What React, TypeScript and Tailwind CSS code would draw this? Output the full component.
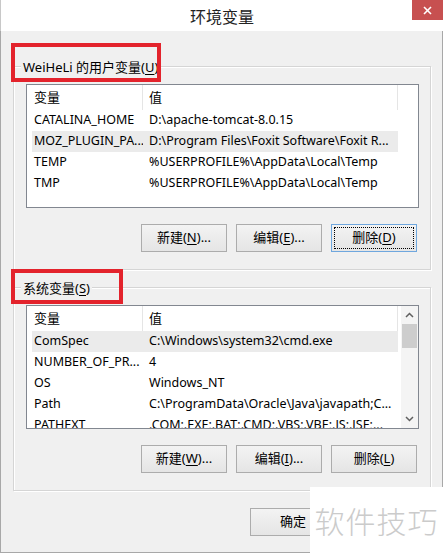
import React from 'react';

interface VarRow {
  name: string;
  value: string;
}

interface VarListProps {
  rows: VarRow[];
  selected?: number;
  scrollbar?: boolean;
}

const userVars: VarRow[] = [
  { name: 'CATALINA_HOME', value: 'D:\\apache-tomcat-8.0.15' },
  { name: 'MOZ_PLUGIN_PA...', value: 'D:\\Program Files\\Foxit Software\\Foxit R...' },
  { name: 'TEMP', value: '%USERPROFILE%\\AppData\\Local\\Temp' },
  { name: 'TMP', value: '%USERPROFILE%\\AppData\\Local\\Temp' },
];

const systemVars: VarRow[] = [
  { name: 'ComSpec', value: 'C:\\Windows\\system32\\cmd.exe' },
  { name: 'NUMBER_OF_PR...', value: '4' },
  { name: 'OS', value: 'Windows_NT' },
  { name: 'Path', value: 'C:\\ProgramData\\Oracle\\Java\\javapath;C...' },
  { name: 'PATHEXT', value: '.COM;.EXE;.BAT;.CMD;.VBS;.VBE;.JS;.JSE;...' },
];

// Windows-style push button, mnemonic letter underlined
const WinButton: React.FC<{ label?: string; mnemonic?: string; suffix?: string; focused?: boolean }> = ({
  label = '',
  mnemonic,
  suffix = '',
  focused = false,
}) => (
  <div
    className={`relative w-[86px] h-[28px] flex items-center justify-center text-[13px] text-black border bg-linear-to-b from-[#f3f3f3] to-[#e5e5e5] ${
      focused ? 'border-[#6fa7de]' : 'border-[#acacac]'
    }`}
  >
    <span className="whitespace-nowrap">
      {label}
      {mnemonic && (
        <>
          (<span className="underline underline-offset-2">{mnemonic}</span>)
        </>
      )}
      {suffix}
    </span>
    {focused && <div className="absolute inset-[2px] border border-dotted border-black"></div>}
  </div>
);

const ScrollBar = () => (
  <div className="w-[17px] h-full bg-[#f4f4f4] flex flex-col items-center">
    <div className="h-[18px] w-full flex items-center justify-center">
      <svg width="9" height="6" viewBox="0 0 9 6">
        <polyline points="1,5 4.5,1.5 8,5" fill="none" stroke="#606060" strokeWidth="1.5" />
      </svg>
    </div>
    <div className="w-[15px] h-[24px] bg-[#cdcdcd]"></div>
    <div className="flex-1"></div>
    <div className="h-[18px] w-full flex items-center justify-center">
      <svg width="9" height="6" viewBox="0 0 9 6">
        <polyline points="1,1 4.5,4.5 8,1" fill="none" stroke="#606060" strokeWidth="1.5" />
      </svg>
    </div>
  </div>
);

const VarList: React.FC<VarListProps> = ({ rows, selected, scrollbar = false }) => (
  <div className="w-[393px] h-[124px] border border-[#828790] bg-white flex overflow-hidden">
    <div className="flex-1 flex flex-col min-w-0">
      {/* column header */}
      <div className="h-[25px] flex items-center text-[13px] text-black shrink-0">
        <div className="w-[116px] h-full pl-[7px] flex items-center border-r border-[#e5e5e5]">变量</div>
        <div className="w-[255px] h-full pl-[6px] flex items-center border-r border-[#e5e5e5]">值</div>
        <div className="flex-1"></div>
      </div>
      {rows.map((row, i) => (
        <div
          key={row.name}
          className={`ml-[5px] w-[366px] h-[21px] shrink-0 flex items-center text-[12.5px] text-black whitespace-nowrap overflow-hidden ${
            i === selected ? 'bg-[#ebebeb]' : ''
          }`}
        >
          <div className="w-[111px] pl-[2px] overflow-hidden">{row.name}</div>
          <div className="flex-1 pl-[6px] overflow-hidden">{row.value}</div>
        </div>
      ))}
    </div>
    {scrollbar && <ScrollBar />}
  </div>
);

const GroupBox: React.FC<{ legend: React.ReactNode; children: React.ReactNode; className?: string }> = ({
  legend,
  children,
  className = '',
}) => (
  <div
    className={`relative w-[418px] border border-[#d5d5d5] shadow-[1px_1px_0_#ffffff,inset_1px_1px_0_#ffffff] pl-[12px] pr-[12px] pt-[17px] pb-[17px] ${className}`}
  >
    <span className="absolute left-[7px] top-0 -translate-y-1/2 px-[2px] bg-[#f0f0f0] text-[13px] leading-[16px] text-black whitespace-nowrap">
      {legend}
    </span>
    {children}
  </div>
);

export default function App() {
  return (
    <div className="relative w-[443px] h-[553px] bg-[#f0f0f0] flex flex-col overflow-hidden font-['Noto_Sans','Noto_Sans_CJK_SC',sans-serif]">
      {/* Title bar */}
      <div className="relative h-[31px] shrink-0 bg-white border-l border-[#c8c8c8] flex items-center justify-center">
        <span className="text-[16px] text-[#222] font-['Noto_Sans_CJK_SC',sans-serif]">环境变量</span>
        <div className="absolute right-0 top-0 w-[31px] h-[20px] bg-[#c75050] flex items-center justify-center">
          <svg width="9" height="9" viewBox="0 0 9 9">
            <line x1="1" y1="1" x2="8" y2="8" stroke="#fff" strokeWidth="1.6" />
            <line x1="8" y1="1" x2="1" y2="8" stroke="#fff" strokeWidth="1.6" />
          </svg>
        </div>
      </div>

      {/* Body */}
      <div className="flex-1 border-l border-r border-b border-[#a8a8a8] pl-[12px] pt-[35px]">
        <GroupBox
          legend={
            <>
              WeiHeLi 的用户变量(<span className="underline underline-offset-2">U</span>)
            </>
          }
        >
          <VarList rows={userVars} selected={1} />
          <div className="mt-[16px] flex justify-end gap-[9px] pr-[1px]">
            <WinButton label="新建" mnemonic="N" suffix="..." />
            <WinButton label="编辑" mnemonic="E" suffix="..." />
            <WinButton label="删除" mnemonic="D" focused />
          </div>
        </GroupBox>

        <GroupBox
          className="mt-[17px]"
          legend={
            <>
              系统变量(<span className="underline underline-offset-2">S</span>)
            </>
          }
        >
          <VarList rows={systemVars} selected={0} scrollbar />
          <div className="mt-[16px] flex justify-end gap-[9px] pr-[1px]">
            <WinButton label="新建" mnemonic="W" suffix="..." />
            <WinButton label="编辑" mnemonic="I" suffix="..." />
            <WinButton label="删除" mnemonic="L" />
          </div>
        </GroupBox>

        {/* OK / Cancel; the cancel button sits under the watermark */}
        <div className="mt-[17px] w-[418px] flex justify-end gap-[9px]">
          <WinButton label="确定" />
          <WinButton />
        </div>
      </div>

      {/* red annotation boxes */}
      <div className="absolute left-[11px] top-[43px] w-[150px] h-[39px] border-4 border-[#e3232c]"></div>
      <div className="absolute left-[11px] top-[269px] w-[112px] h-[35px] border-4 border-[#e3232c]"></div>

      {/* watermark */}
      <div className="absolute right-0 bottom-0 w-[133px] h-[66px] bg-white flex items-center justify-center">
        <span className="text-[30px] text-[#cbcbcb] tracking-[1px] font-['Noto_Sans_CJK_SC',sans-serif] font-light">
          软件技巧
        </span>
      </div>
    </div>
  );
}
